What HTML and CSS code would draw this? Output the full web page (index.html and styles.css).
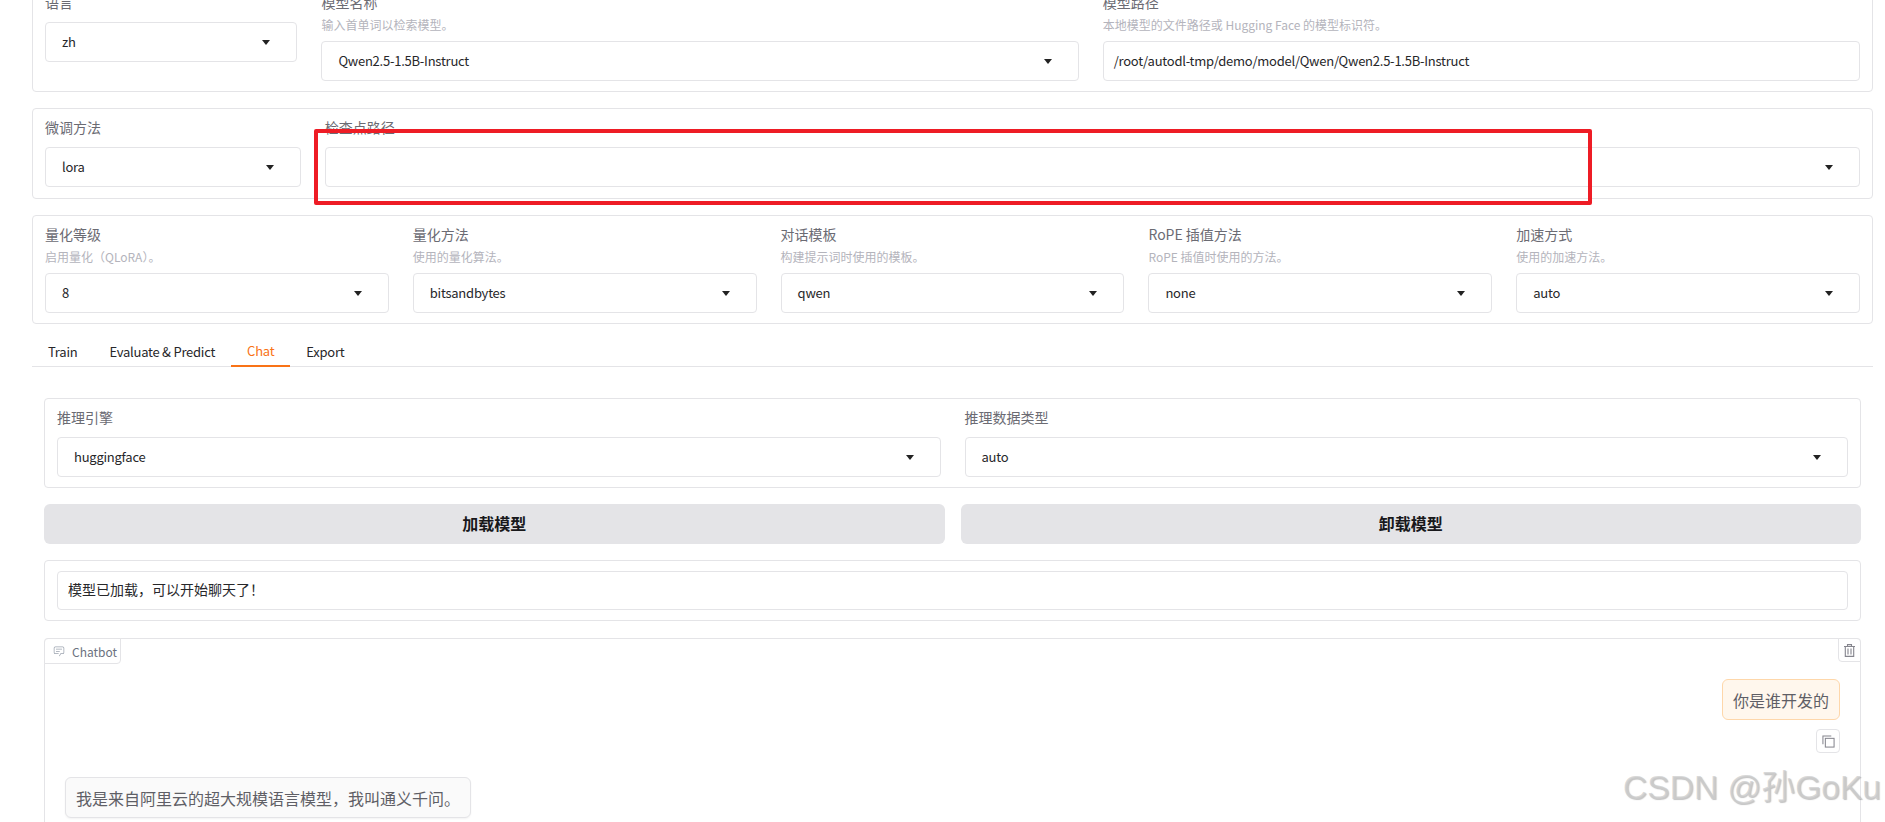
FILE: index.html
```html
<!DOCTYPE html>
<html lang="zh">
<head>
<meta charset="utf-8">
<title>Chat</title>
<link rel="stylesheet" href="styles.css">
</head>
<body>
<main class="page">
  <section class="panel panel-top cols-model">
    <div class="field">
      <label class="label label-gap">语言</label>
      <div class="select"><span>zh</span><i class="caret"></i></div>
    </div>
    <div class="field">
      <label class="label">模型名称</label>
      <p class="hint">输入首单词以检索模型。</p>
      <div class="select"><span>Qwen2.5-1.5B-Instruct</span><i class="caret"></i></div>
    </div>
    <div class="field">
      <label class="label">模型路径</label>
      <p class="hint">本地模型的文件路径或 Hugging Face 的模型标识符。</p>
      <div class="select select-text"><span>/root/autodl-tmp/demo/model/Qwen/Qwen2.5-1.5B-Instruct</span></div>
    </div>
  </section>

  <section class="panel panel-mid cols-adapter">
    <div class="field">
      <label class="label label-gap">微调方法</label>
      <div class="select"><span>lora</span><i class="caret"></i></div>
    </div>
    <div class="field">
      <label class="label label-gap">检查点路径</label>
      <div class="select"><span></span><i class="caret"></i></div>
    </div>
    <div class="redbox"></div>
  </section>

  <section class="panel panel-adv cols-five">
    <div class="field">
      <label class="label">量化等级</label>
      <p class="hint">启用量化（QLoRA）。</p>
      <div class="select"><span>8</span><i class="caret"></i></div>
    </div>
    <div class="field">
      <label class="label">量化方法</label>
      <p class="hint">使用的量化算法。</p>
      <div class="select"><span>bitsandbytes</span><i class="caret"></i></div>
    </div>
    <div class="field">
      <label class="label">对话模板</label>
      <p class="hint">构建提示词时使用的模板。</p>
      <div class="select"><span>qwen</span><i class="caret"></i></div>
    </div>
    <div class="field">
      <label class="label">RoPE 插值方法</label>
      <p class="hint">RoPE 插值时使用的方法。</p>
      <div class="select"><span>none</span><i class="caret"></i></div>
    </div>
    <div class="field">
      <label class="label">加速方式</label>
      <p class="hint">使用的加速方法。</p>
      <div class="select"><span>auto</span><i class="caret"></i></div>
    </div>
  </section>

  <nav class="tabs">
    <button class="tab">Train</button>
    <button class="tab">Evaluate &amp; Predict</button>
    <button class="tab tab-active">Chat</button>
    <button class="tab">Export</button>
  </nav>

  <div class="tab-body">
    <section class="panel panel-engine cols-two">
      <div class="field">
        <label class="label label-gap">推理引擎</label>
        <div class="select"><span>huggingface</span><i class="caret"></i></div>
      </div>
      <div class="field">
        <label class="label label-gap">推理数据类型</label>
        <div class="select"><span>auto</span><i class="caret"></i></div>
      </div>
    </section>

    <div class="actions">
      <button class="btn">加载模型</button>
      <button class="btn">卸载模型</button>
    </div>

    <section class="panel panel-status">
      <div class="status">模型已加载，可以开始聊天了！</div>
    </section>

    <section class="chatbot">
      <div class="chat-label">
        <svg class="chat-icon" viewBox="0 0 32 32" fill="currentColor"><path d="M17.74 30 16 29l4-7h6a2 2 0 0 0 2-2V8a2 2 0 0 0-2-2H6a2 2 0 0 0-2 2v12a2 2 0 0 0 2 2h9v2H6a4 4 0 0 1-4-4V8a4 4 0 0 1 4-4h20a4 4 0 0 1 4 4v12a4 4 0 0 1-4 4h-4.84z"/><path d="M8 10h16v2H8zM8 16h10v2H8z"/></svg>
        <span>Chatbot</span>
      </div>
      <button class="icon-btn trash" aria-label="clear">
        <svg viewBox="0 0 11 13" fill="none" stroke="currentColor" stroke-width="1.1"><path d="M0 2.5h11M3.5 2.5V.6h4v1.9M1.3 2.5v9.9h8.4V2.5M4 4.5v6M7 4.5v6"/></svg>
      </button>
      <div class="messages">
        <div class="bubble bubble-user">你是谁开发的</div>
        <button class="icon-btn copy" aria-label="copy">
          <svg viewBox="0 0 14 14" fill="none" stroke="currentColor" stroke-width="1.1"><rect x="3.6" y="3.6" width="9.4" height="9.4"/><path d="M1 10V1h9"/></svg>
        </button>
        <div class="bubble bubble-bot">我是来自阿里云的超大规模语言模型，我叫通义千问。</div>
      </div>
    </section>
  </div>
</main>
<div class="watermark">CSDN @孙GoKu</div>
</body>
</html>
```
FILE: styles.css
```css
* { box-sizing: border-box; }
html, body { margin: 0; height: 100%; overflow: hidden; background: #fff; }
body {
  font-family: "Noto Sans CJK SC", "Noto Sans", sans-serif;
  font-size: 14px;
  color: #27272a;
  position: relative;
}
.page { margin-top: -17px; padding: 0 12px 0 32px; }

.panel {
  position: relative;
  border: 1px solid #e4e4e7;
  border-radius: 4px;
  background: #fff;
  padding: 10px 12px;
  display: grid;
  column-gap: 24px;
}
.panel-top { height: 109px; margin-bottom: 16px; }
.panel-mid { height: 91px; margin-bottom: 16px; }
.panel-adv { height: 109px; }
.cols-model { grid-template-columns: 1fr 3fr 3fr; }
.cols-adapter { grid-template-columns: 1fr 6fr; }
.cols-five { grid-template-columns: repeat(5, 1fr); }
.cols-two { grid-template-columns: 1fr 1fr; }

.label { display: block; height: 20px; line-height: 16px; color: #6b6b73; font-size: 14px; margin-bottom: 3px; }
.label-gap { margin-bottom: 8px; }
.hint { margin: 0 0 6px; height: 18px; line-height: 16px; font-size: 12px; color: #b4b4bc; }

.select {
  position: relative;
  display: flex;
  align-items: center;
  height: 40px;
  padding: 0 16px 2px;
  border: 1px solid #e4e4e7;
  border-radius: 4px;
  background: #fff;
  font-size: 13px;
  letter-spacing: -0.24px;
  color: #27272a;
}
.select-text { padding: 0 10px 2px; }
.caret {
  position: absolute;
  right: 26px;
  top: 17px;
  width: 0;
  height: 0;
  border-left: 4.5px solid transparent;
  border-right: 4.5px solid transparent;
  border-top: 5px solid #222;
}

.redbox {
  position: absolute;
  left: 281px;
  top: 20px;
  width: 1278px;
  height: 76px;
  border: 4px solid #ee1c25;
  border-radius: 2px;
}

.tabs {
  display: flex;
  height: 30px;
  margin-top: 13px;
  border-bottom: 1px solid #e4e4e7;
}
.tab {
  height: 30px;
  padding: 0 16px 2px;
  border: 0;
  background: none;
  font: inherit;
  font-size: 13px;
  letter-spacing: -0.24px;
  color: #27272a;
}
.tab-active { color: #f97316; border-bottom: 2px solid #f97316; }

.tab-body { padding: 31px 12px 0; }
.panel-engine { height: 90px; margin-bottom: 16px; }
.actions { display: grid; grid-template-columns: 1fr 1fr; column-gap: 16px; margin-bottom: 16px; }
.btn {
  height: 40px;
  padding: 0 0 2px;
  border: 0;
  border-radius: 6px;
  background: #e4e4e7;
  font: inherit;
  font-size: 16px;
  font-weight: 700;
  color: #18181b;
}
.panel-status { height: 61px; margin-bottom: 17px; }
.status {
  height: 39px;
  display: flex;
  align-items: center;
  padding: 0 10px 3px;
  border: 1px solid #e4e4e7;
  border-radius: 4px;
  font-size: 14px;
}

.chatbot {
  position: relative;
  height: 420px;
  border: 1px solid #e4e4e7;
  border-radius: 4px;
}
.chat-label {
  position: absolute;
  left: -1px;
  top: -1px;
  width: 77px;
  height: 26px;
  display: flex;
  align-items: center;
  gap: 7px;
  padding-left: 8px;
  border: 1px solid #e4e4e7;
  border-radius: 4px 0 4px 0;
  background: #fff;
  font-size: 12px;
  color: #6b7280;
}
.chat-icon { width: 12px; height: 12px; color: #9ca3af; }
.icon-btn {
  display: flex;
  align-items: center;
  justify-content: center;
  padding: 0;
  border: 1px solid #e4e4e7;
  background: #fff;
  color: #85858d;
}
.trash {
  position: absolute;
  right: -1px;
  top: -1px;
  width: 23px;
  height: 24px;
  border-radius: 0 4px 0 4px;
}
.trash svg { width: 11px; height: 13px; }
.messages { display: flex; flex-direction: column; padding: 40px 20px 0; }
.bubble {
  height: 41px;
  display: flex;
  align-items: center;
  padding: 0 10px;
  font-size: 16px;
  color: #5f5f66;
  border-radius: 6px;
}
.bubble-user {
  align-self: flex-end;
  background: #fff7ed;
  border: 1px solid #fed7aa;
}
.copy {
  align-self: flex-end;
  width: 24px;
  height: 24px;
  margin-top: 9px;
  border-radius: 4px;
}
.copy svg { width: 13px; height: 13px; }
.bubble-bot {
  align-self: flex-start;
  background: #fafafa;
  border: 1px solid #e4e4e7;
  box-shadow: 0 1px 2px rgba(0,0,0,.05);
  margin-top: 24px;
}

.watermark {
  position: absolute;
  left: 1623px;
  top: 768px;
  font-family: "Liberation Sans", "Noto Sans CJK SC", sans-serif;
  font-size: 33.6px;
  line-height: 40px;
  white-space: nowrap;
  color: rgba(205,205,205,.75);
  text-shadow: 1px 1px 1px rgba(120,120,120,.45);
}
```
